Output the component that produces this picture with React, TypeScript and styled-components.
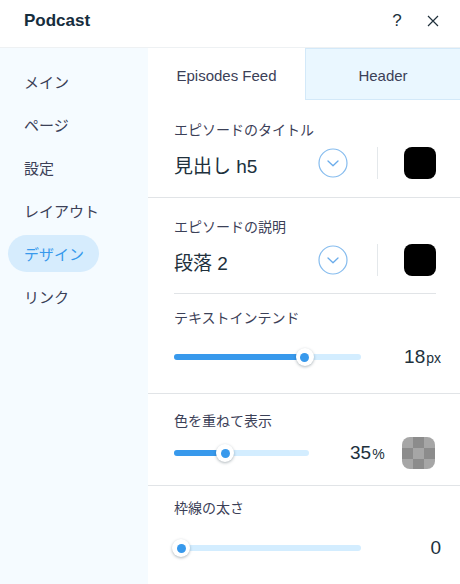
import styled, { createGlobalStyle } from "styled-components"

const GlobalStyle = createGlobalStyle`
    html, body {
        margin: 0;
        padding: 0;
        background: #ffffff;
    }
    body {
        font-family: "Liberation Sans", "Noto Sans CJK JP", sans-serif;
        -webkit-font-smoothing: antialiased;
    }
`

const menu = ['メイン', 'ページ', '設定', 'レイアウト', 'デザイン', 'リンク']

function Chevron() {
    return (
        <svg width="30" height="30" viewBox="0 0 30 30">
            <circle cx="15" cy="15" r="14" fill="none" stroke="#86bcee" strokeWidth="1.2" />
            <path d="M10 13 L15 17.8 L20 13" fill="none" stroke="#6aaceb" strokeWidth="1.3" strokeLinecap="round" strokeLinejoin="round" />
        </svg>
    )
}

function Slider({ width, value }: { width: number; value: number }) {
    return (
        <Track style={{ width }}>
            <Fill style={{ width: `${value}%` }} />
            <Thumb style={{ left: `calc(${value}% - 9px)` }}>
                <ThumbDot />
            </Thumb>
        </Track>
    )
}

function App() {
    return (
        <Panel>
            <GlobalStyle />
            <TopBar>
                <Title>Podcast</Title>
                <TopIcons>
                    <TopIcon>?</TopIcon>
                    <TopIcon>
                        <svg width="12" height="12" viewBox="0 0 12 12">
                            <path d="M1 1 L11 11 M11 1 L1 11" stroke="#20303c" strokeWidth="1.2" />
                        </svg>
                    </TopIcon>
                </TopIcons>
            </TopBar>
            <Body>
                <Sidebar>
                    {menu.map((m) => (
                        <MenuItem key={m} active={m === 'デザイン'}>{m}</MenuItem>
                    ))}
                </Sidebar>
                <Content>
                    <Tabs>
                        <Tab>Episodes Feed</Tab>
                        <Tab inactive>Header</Tab>
                    </Tabs>

                    <Section pt={21} pb={17}>
                        <Label>エピソードのタイトル</Label>
                        <Row>
                            <ValueText>見出し h5</ValueText>
                            <Chevron />
                            <VDivider />
                            <Swatch />
                        </Row>
                    </Section>
                    <Divider />

                    <Section pt={20} pb={16}>
                        <Label>エピソードの説明</Label>
                        <Row>
                            <ValueText>段落 2</ValueText>
                            <Chevron />
                            <VDivider />
                            <Swatch />
                        </Row>
                    </Section>
                    <Divider inset />

                    <Section pt={15} pb={19}>
                        <Label>テキストインテンド</Label>
                        <SliderRow gap={13}>
                            <Slider width={187} value={70} />
                            <Amount wide>18<Unit>px</Unit></Amount>
                        </SliderRow>
                    </Section>
                    <Divider />

                    <Section pt={18} pb={15}>
                        <Label>色を重ねて表示</Label>
                        <SliderRow gap={6}>
                            <Slider width={135} value={38} />
                            <Amount>35<Unit>%</Unit></Amount>
                            <Checker />
                        </SliderRow>
                    </Section>
                    <Divider />

                    <Section pt={13} pb={26}>
                        <Label>枠線の太さ</Label>
                        <SliderRow gap={14}>
                            <Slider width={187} value={4} />
                            <Amount wide>0</Amount>
                        </SliderRow>
                    </Section>
                    <Divider />
                </Content>
            </Body>
        </Panel>
    )
}

export default App

const Panel = styled.div`
    width: 460px;
    height: 584px;
    overflow: hidden;
    background: #ffffff;
`
const TopBar = styled.div`
    height: 48px;
    box-sizing: border-box;
    display: flex;
    align-items: center;
    justify-content: space-between;
    padding: 0 18px 0 24px;
    border-bottom: 1px solid #eef1f3;
`
const Title = styled.div`
    font-size: 17px;
    font-weight: bold;
    color: #162d3d;
    margin-top: -5px;
`
const TopIcons = styled.div`
    display: flex;
    align-items: center;
    gap: 18px;
    margin-top: -5px;
`
const TopIcon = styled.div`
    width: 18px;
    display: flex;
    justify-content: center;
    font-size: 17px;
    font-weight: 300;
    color: #20303c;
`
const Body = styled.div`
    display: grid;
    grid-template-columns: 148px 1fr;
    height: 536px;
`
const Sidebar = styled.div`
    background: #f5fbff;
    padding: 15px 0 0 8px;
    display: flex;
    flex-direction: column;
    gap: 6px;
`
const MenuItem = styled.div<{ active?: boolean }>`
    width: 91px;
    height: 37px;
    box-sizing: border-box;
    padding-left: 16px;
    border-radius: 19px;
    display: flex;
    align-items: center;
    font-size: 15px;
    color: ${(p) => (p.active ? '#3899ec' : '#3b4057')};
    background: ${(p) => (p.active ? '#d6ecfd' : 'transparent')};
`
const Content = styled.div`
    display: flex;
    flex-direction: column;
    background: #ffffff;
`
const Tabs = styled.div`
    display: grid;
    grid-template-columns: 157px 1fr;
    height: 52px;
`
const Tab = styled.div<{ inactive?: boolean }>`
    display: flex;
    align-items: center;
    justify-content: center;
    font-size: 15px;
    color: #3b4057;
    background: ${(p) => (p.inactive ? '#eaf7ff' : '#ffffff')};
    border: ${(p) => (p.inactive ? '1px solid #d3e9f9' : 'none')};
    border-right: none;
    box-sizing: border-box;
    padding-top: 2px;
`
const Section = styled.div<{ pt: number; pb: number }>`
    padding: ${(p) => p.pt}px 24px ${(p) => p.pb}px 26px;
    display: flex;
    flex-direction: column;
`
const Label = styled.div`
    font-size: 14px;
    line-height: 18px;
    color: #3b4057;
`
const Row = styled.div`
    display: flex;
    align-items: center;
    height: 34px;
    margin-top: 7px;
`
const ValueText = styled.div`
    flex: 1;
    font-size: 19px;
    color: #20303c;
    margin-top: 2px;
`
const VDivider = styled.div`
    width: 1px;
    height: 32px;
    background: #e4e8eb;
    margin: 0 26px 0 29px;
`
const Swatch = styled.div`
    width: 32px;
    height: 32px;
    border-radius: 8px;
    background: #000000;
`
const Checker = styled.div`
    width: 33px;
    height: 32px;
    border-radius: 8px;
    margin-left: 17px;
    background-color: #a6a6a6;
    background-image:
        linear-gradient(45deg, #8c8c8c 25%, transparent 25%, transparent 75%, #8c8c8c 75%),
        linear-gradient(45deg, #8c8c8c 25%, transparent 25%, transparent 75%, #8c8c8c 75%);
    background-size: 22px 22px;
    background-position: 0 0, 11px 11px;
`
const Divider = styled.div<{ inset?: boolean }>`
    height: 1px;
    background: #e1e4e7;
    margin: ${(p) => (p.inset ? '0 24px 0 26px' : '0')};
`
const SliderRow = styled.div<{ gap: number }>`
    display: flex;
    align-items: center;
    height: 34px;
    margin-top: ${(p) => p.gap}px;
`
const Track = styled.div`
    position: relative;
    height: 6px;
    border-radius: 3px;
    background: #d3edff;
`
const Fill = styled.div`
    height: 100%;
    border-radius: 3px;
    background: #3899ec;
`
const Thumb = styled.div`
    position: absolute;
    top: -6px;
    width: 18px;
    height: 18px;
    border-radius: 50%;
    background: #ffffff;
    box-shadow: 0 1px 3px rgba(22, 45, 61, 0.35);
    display: flex;
    align-items: center;
    justify-content: center;
`
const ThumbDot = styled.div`
    width: 9px;
    height: 9px;
    border-radius: 50%;
    background: #3899ec;
`
const Amount = styled.div<{ wide?: boolean }>`
    flex: ${(p) => (p.wide ? '1' : 'none')};
    margin-left: ${(p) => (p.wide ? '0' : '41px')};
    margin-right: ${(p) => (p.wide ? '-5px' : '0')};
    text-align: right;
    font-size: 19px;
    color: #20303c;
`
const Unit = styled.span`
    font-size: 14px;
    margin-left: 1px;
`
